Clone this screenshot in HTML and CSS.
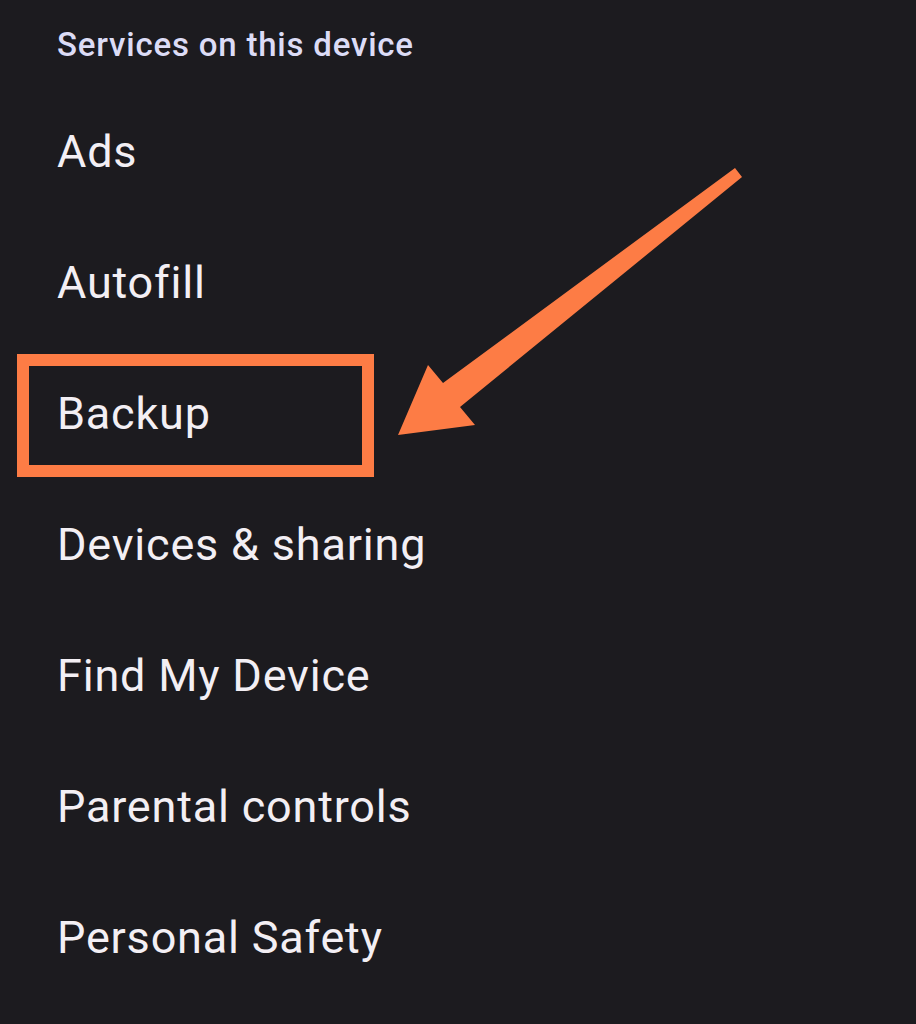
FILE: index.html
```html
<!DOCTYPE html>
<html lang="en">
<head>
<meta charset="utf-8">
<title>Services on this device</title>
<link rel="stylesheet" href="styles.css">
</head>
<body>
<main class="screen">
  <h2 class="section-title">Services on this device</h2>
  <ul class="menu">
    <li class="menu-item">Ads</li>
    <li class="menu-item">Autofill</li>
    <li class="menu-item">Backup</li>
    <li class="menu-item">Devices &amp; sharing</li>
    <li class="menu-item">Find My Device</li>
    <li class="menu-item">Parental controls</li>
    <li class="menu-item">Personal Safety</li>
  </ul>
  <svg class="annotation" width="916" height="1024" viewBox="0 0 916 1024" aria-hidden="true">
    <rect x="23" y="360" width="345" height="111" fill="none" stroke="#fd7c45" stroke-width="12"/>
    <polygon fill="#fd7c45" points="735,168 742,177 460,407 475,425 398,435 428,365 443,383"/>
  </svg>
</main>
</body>
</html>
```

FILE: styles.css
```css
html, body {
  margin: 0;
  padding: 0;
  background: #1c1b1f;
}

.screen {
  position: relative;
  width: 916px;
  height: 1024px;
  overflow: hidden;
  background: #1c1b1f;
  font-family: Roboto, "Noto Sans", sans-serif;
}

.section-title {
  margin: 0;
  padding: 23px 0 0 57px;
  height: 86px;
  box-sizing: border-box;
  font-size: 33px;
  line-height: 44px;
  font-weight: 500;
  letter-spacing: 0.8px;
  color: #dcdcf6;
}

.menu {
  list-style: none;
  margin: 0;
  padding: 0 0 0 57px;
  display: flex;
  flex-direction: column;
}

.menu-item {
  height: 131px;
  line-height: 131px;
  font-size: 45px;
  font-weight: 400;
  letter-spacing: 0.8px;
  color: #f3eff4;
}

.annotation {
  position: absolute;
  left: 0;
  top: 0;
  pointer-events: none;
}
```
